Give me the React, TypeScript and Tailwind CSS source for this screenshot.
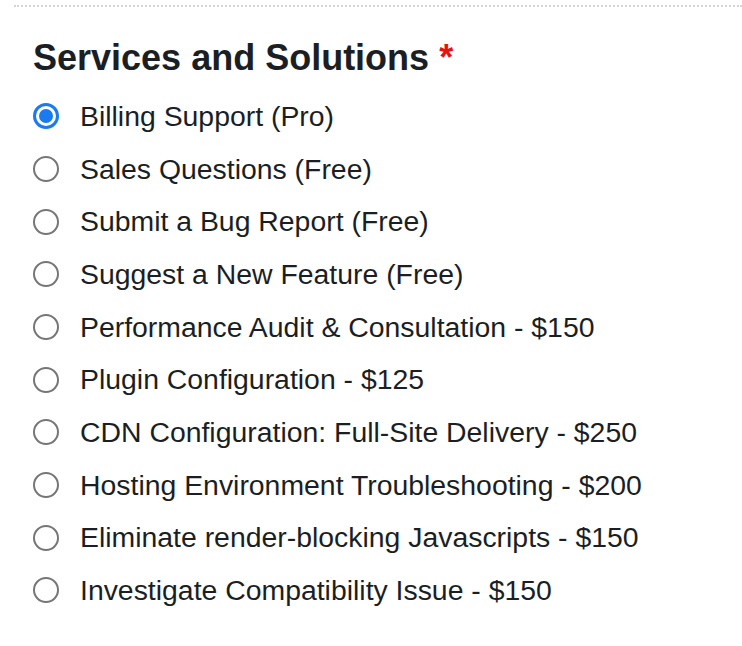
import { useState } from 'react'

const options = [
  'Billing Support (Pro)',
  'Sales Questions (Free)',
  'Submit a Bug Report (Free)',
  'Suggest a New Feature (Free)',
  'Performance Audit & Consultation - $150',
  'Plugin Configuration - $125',
  'CDN Configuration: Full-Site Delivery - $250',
  'Hosting Environment Troubleshooting - $200',
  'Eliminate render-blocking Javascripts - $150',
  'Investigate Compatibility Issue - $150',
]

export default function App() {
  const [selected, setSelected] = useState(0)

  return (
    <main className="w-[742px] h-[646px] bg-white font-['Liberation_Sans',Arial,sans-serif] text-[#1b1f24] overflow-hidden">
      <div className="pt-[5px] pl-[14px]">
        <div className="border-t-2 border-dotted border-[#d4d4d4]" />
      </div>
      <div className="pl-[33px] pt-[31px]">
        <h2 className="text-[36px] font-bold leading-[40px] mb-[12px]">
          Services and Solutions <span className="text-[#e8110f]">*</span>
        </h2>
        <div className="flex flex-col">
          {options.map((label, i) => (
            <label
              key={label}
              className="flex items-center h-[52.67px] gap-[21px] cursor-pointer"
              onClick={() => setSelected(i)}
            >
              {selected === i ? (
                <span className="w-[26px] h-[26px] rounded-full border-[3px] border-[#1a7af0] flex items-center justify-center">
                  <span className="w-[14px] h-[14px] rounded-full bg-[#1a7af0]" />
                </span>
              ) : (
                <span className="w-[26px] h-[26px] rounded-full border-[2.5px] border-[#767676] bg-white" />
              )}
              <span className="text-[28.4px] leading-none">{label}</span>
            </label>
          ))}
        </div>
      </div>
    </main>
  )
}
